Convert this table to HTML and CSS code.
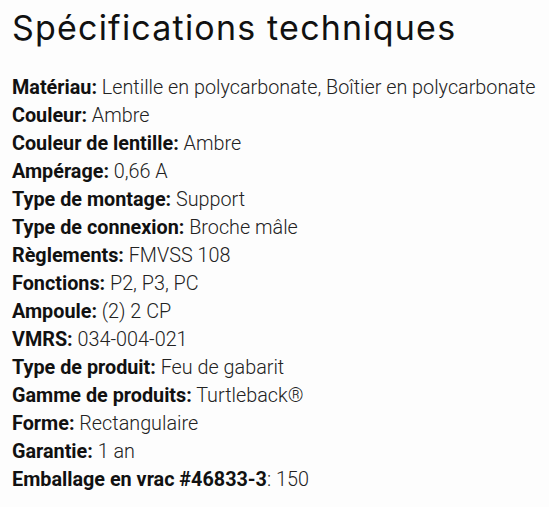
FILE: index.html
```html
<!DOCTYPE html>
<html lang="fr">
<head>
<meta charset="utf-8">
<link rel="stylesheet" href="styles.css">
</head>
<body>
<section class="specs">
  <h2 class="specs-title">Spécifications techniques</h2>
  <ul class="specs-list">
    <li><strong>Matériau:</strong> Lentille en polycarbonate, Boîtier en polycarbonate</li>
    <li><strong>Couleur:</strong> Ambre</li>
    <li><strong>Couleur de lentille:</strong> Ambre</li>
    <li><strong>Ampérage:</strong> 0,66 A</li>
    <li><strong>Type de montage:</strong> Support</li>
    <li><strong>Type de connexion:</strong> Broche mâle</li>
    <li><strong>Règlements:</strong> FMVSS 108</li>
    <li><strong>Fonctions:</strong> P2, P3, PC</li>
    <li><strong>Ampoule:</strong> (2) 2 CP</li>
    <li><strong>VMRS:</strong> 034-004-021</li>
    <li><strong>Type de produit:</strong> Feu de gabarit</li>
    <li><strong>Gamme de produits:</strong> Turtleback®</li>
    <li><strong>Forme:</strong> Rectangulaire</li>
    <li><strong>Garantie:</strong> 1 an</li>
    <li><strong>Emballage en vrac #46833-3</strong>: 150</li>
  </ul>
</section>
</body>
</html>
```
FILE: styles.css
```css
html, body {
  margin: 0;
  padding: 0;
  background: #fdfdfd;
}
.specs {
  padding: 6px 12px 0;
  color: #222;
}
.specs-title {
  font-family: "Inter", "Open Sans", sans-serif;
  font-weight: 400;
  font-size: 34px;
  line-height: 44px;
  margin: 0 0 24px;
  color: #111;
  letter-spacing: 1.2px;
}
.specs-list {
  list-style: none;
  margin: 0;
  padding: 0;
  font-family: "Roboto", sans-serif;
  font-weight: 300;
  font-size: 19.8px;
  line-height: 28px;
  color: #222;
}
.specs-list strong {
  font-weight: 700;
  color: #111;
}
```
